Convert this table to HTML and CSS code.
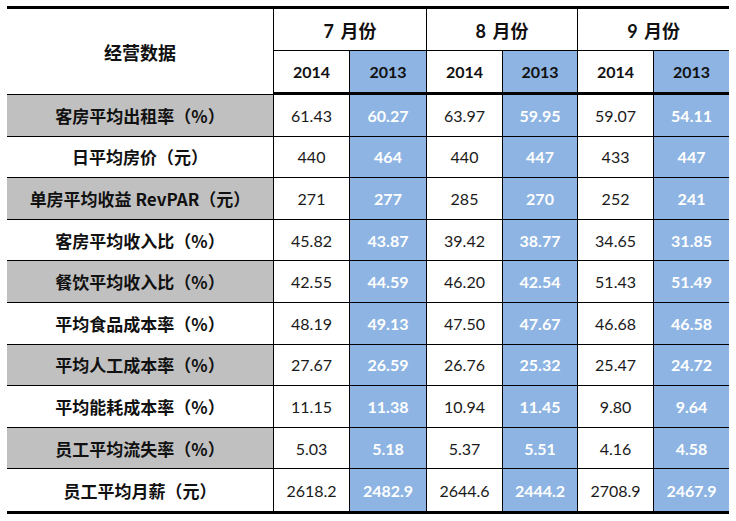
FILE: index.html
```html
<!DOCTYPE html>
<html lang="zh-CN">
<head>
<meta charset="utf-8">
<title>经营数据</title>
<link rel="stylesheet" href="styles.css">
</head>
<body>
<table class="ops">
  <colgroup>
    <col class="c-label">
    <col class="c-a">
    <col class="c-b">
    <col class="c-a">
    <col class="c-d">
    <col class="c-a">
    <col class="c-d">
  </colgroup>
  <thead>
    <tr class="h1">
      <th rowspan="2" class="label-head">经营数据</th>
      <th colspan="2" class="month">7 月份</th>
      <th colspan="2" class="month">8 月份</th>
      <th colspan="2" class="month last">9 月份</th>
    </tr>
    <tr class="h2">
      <th class="yr">2014</th>
      <th class="yr blue">2013</th>
      <th class="yr">2014</th>
      <th class="yr blue">2013</th>
      <th class="yr">2014</th>
      <th class="yr blue last">2013</th>
    </tr>
  </thead>
  <tbody>
    <tr class="row">
      <td class="lbl grey">客房平均出租率（%）</td>
      <td class="num">61.43</td><td class="num blue">60.27</td>
      <td class="num">63.97</td><td class="num blue">59.95</td>
      <td class="num">59.07</td><td class="num blue last">54.11</td>
    </tr>
    <tr class="row">
      <td class="lbl">日平均房价（元）</td>
      <td class="num">440</td><td class="num blue">464</td>
      <td class="num">440</td><td class="num blue">447</td>
      <td class="num">433</td><td class="num blue last">447</td>
    </tr>
    <tr class="row">
      <td class="lbl grey">单房平均收益 RevPAR（元）</td>
      <td class="num">271</td><td class="num blue">277</td>
      <td class="num">285</td><td class="num blue">270</td>
      <td class="num">252</td><td class="num blue last">241</td>
    </tr>
    <tr class="row">
      <td class="lbl">客房平均收入比（%）</td>
      <td class="num">45.82</td><td class="num blue">43.87</td>
      <td class="num">39.42</td><td class="num blue">38.77</td>
      <td class="num">34.65</td><td class="num blue last">31.85</td>
    </tr>
    <tr class="row">
      <td class="lbl grey">餐饮平均收入比（%）</td>
      <td class="num">42.55</td><td class="num blue">44.59</td>
      <td class="num">46.20</td><td class="num blue">42.54</td>
      <td class="num">51.43</td><td class="num blue last">51.49</td>
    </tr>
    <tr class="row">
      <td class="lbl">平均食品成本率（%）</td>
      <td class="num">48.19</td><td class="num blue">49.13</td>
      <td class="num">47.50</td><td class="num blue">47.67</td>
      <td class="num">46.68</td><td class="num blue last">46.58</td>
    </tr>
    <tr class="row">
      <td class="lbl grey">平均人工成本率（%）</td>
      <td class="num">27.67</td><td class="num blue">26.59</td>
      <td class="num">26.76</td><td class="num blue">25.32</td>
      <td class="num">25.47</td><td class="num blue last">24.72</td>
    </tr>
    <tr class="row">
      <td class="lbl">平均能耗成本率（%）</td>
      <td class="num">11.15</td><td class="num blue">11.38</td>
      <td class="num">10.94</td><td class="num blue">11.45</td>
      <td class="num">9.80</td><td class="num blue last">9.64</td>
    </tr>
    <tr class="row">
      <td class="lbl grey">员工平均流失率（%）</td>
      <td class="num">5.03</td><td class="num blue">5.18</td>
      <td class="num">5.37</td><td class="num blue">5.51</td>
      <td class="num">4.16</td><td class="num blue last">4.58</td>
    </tr>
    <tr class="row end">
      <td class="lbl">员工平均月薪（元）</td>
      <td class="num">2618.2</td><td class="num blue">2482.9</td>
      <td class="num">2644.6</td><td class="num blue">2444.2</td>
      <td class="num">2708.9</td><td class="num blue last">2467.9</td>
    </tr>
  </tbody>
</table>
</body>
</html>
```
FILE: styles.css
```css
html, body {
  background: #ffffff;
}

body {
  margin: 6px 0 0 7px;
  font-family: Lato, "Noto Sans CJK SC", sans-serif;
  color: #111111;
}

.ops {
  border-collapse: separate;
  border-spacing: 0;
  table-layout: fixed;
  width: 722px;
  border-top: 3px solid #000;
  border-bottom: 3px solid #000;
}

.c-label { width: 267px; }
.c-a { width: 76px; }
.c-b { width: 77px; }
.c-d { width: 75px; }

.ops th,
.ops td {
  padding: 0;
  text-align: center;
  vertical-align: middle;
  border-right: 1px solid #000;
  border-bottom: 1px solid #000;
  background: #ffffff;
}

.ops .last {
  border-right: none;
}

.h1 { height: 42px; }
.h2 { height: 44px; }
.row { height: 41.6px; }

.h2 th,
.label-head {
  border-bottom: 3px solid #000;
}

.ops .end td {
  border-bottom: none;
}

.label-head,
.lbl {
  font-family: "Noto Sans CJK SC", sans-serif;
  font-weight: 700;
  font-size: 17px;
  color: #111;
}

.label-head {
  font-size: 18px;
}

.month {
  font-family: Lato, "Noto Sans CJK SC", sans-serif;
  font-weight: 700;
  font-size: 18px;
  word-spacing: 2px;
  color: #111;
}

.yr {
  font-weight: 700;
  font-size: 16px;
  color: #111;
}

.num {
  font-size: 16px;
  font-weight: 400;
  color: #1a1a1a;
}

.ops .grey {
  background: #c0c0c0;
}

.ops .blue {
  background: #8db4e2;
}

.ops td.blue {
  color: #ffffff;
  font-weight: 700;
}
```
